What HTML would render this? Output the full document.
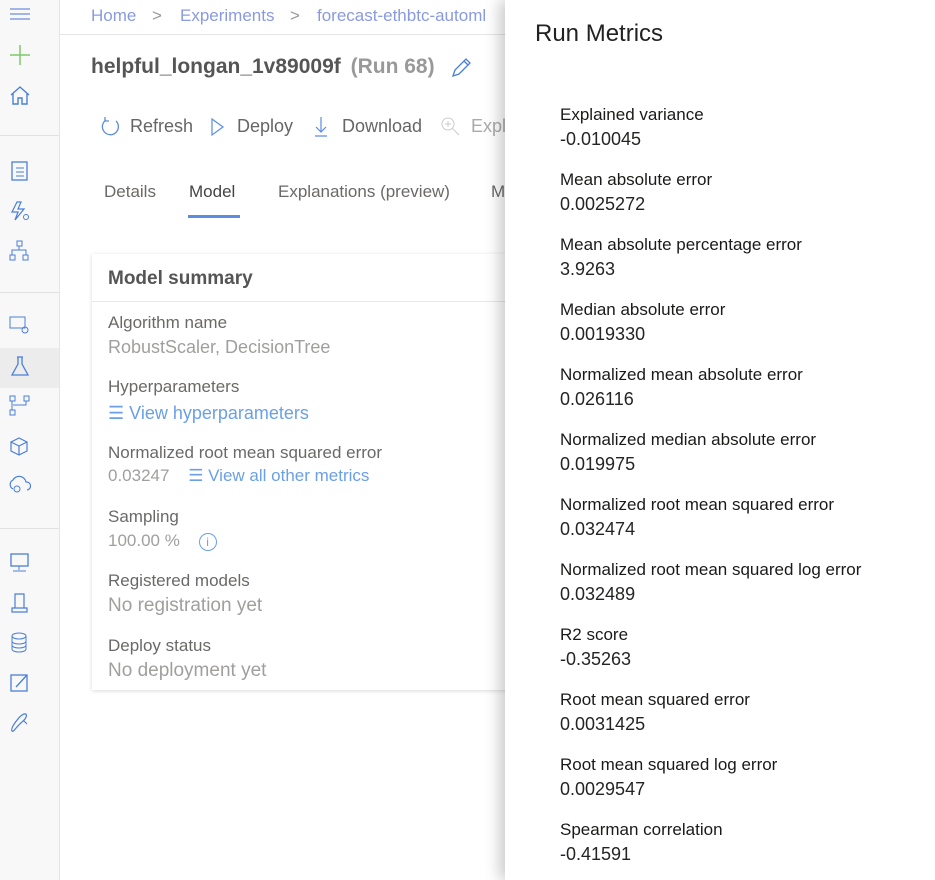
<!DOCTYPE html>
<html><head><style>
*{margin:0;padding:0;box-sizing:border-box}
body{width:935px;height:880px;position:relative;overflow:hidden;background:#fff;font-family:"Segoe UI","Liberation Sans",sans-serif;color:#323130}
.side{position:absolute;left:0;top:0;width:60px;height:880px;background:#f8f8f8;border-right:1px solid #e5e5e5}
.side .sep{position:absolute;left:0;width:59px;height:1px;background:#e1e1e1}
.side svg{position:absolute;left:9px}
.main{position:absolute;left:60px;top:0;width:445px;height:880px;color:#6f6d6b}
.bc{position:absolute;left:0;top:0;width:445px;height:35px;border-bottom:1px solid #e5e5e5;font-size:17px;color:#8a9ae0}
.bc span{position:absolute;top:6px}
.panel{position:absolute;left:505px;top:0;width:430px;height:880px;background:#fff;box-shadow:-6px 0 14px rgba(0,0,0,.2)}
.panel h1{position:absolute;left:30px;top:20px;font-size:24px;font-weight:400;color:#222}
.m{position:absolute;left:55px;font-size:17px;color:#1b1a19;line-height:25px}
.m div+div{font-size:18px;color:#252423}
.card{position:absolute;left:32px;top:254px;width:420px;height:436px;background:#fff;box-shadow:0 1px 4px rgba(0,0,0,.15)}
.lab{position:absolute;left:16px;font-size:17px;color:#6b6967}
.val{position:absolute;left:16px;font-size:18px;color:#a19f9d}
.link{color:#6b9fe8}
</style></head><body>
<div class="side">
<svg style="top:6px" width="22" height="16"><path d="M1 3h20M1 8h20M1 13h20" stroke="#6b8fe0" stroke-width="1.2"/></svg>
<svg style="top:44px" width="22" height="22"><path d="M11 1v20M1 11h20" stroke="#7dc96a" stroke-width="1.5"/></svg>
<svg style="top:85px" width="22" height="22"><path d="M2 10L11 2l9 8M4 8v11h5v-6h4v6h5V8" stroke="#4a7fd8" stroke-width="1.4" fill="none"/></svg>
<div class="sep" style="top:135px"></div>
<svg style="top:160px" width="22" height="22"><rect x="3" y="2" width="15" height="18" stroke="#4a7fd8" fill="none" stroke-width="1.3"/><path d="M7 8h8M7 12h8M7 16h8" stroke="#4a7fd8"/></svg>
<svg style="top:200px" width="22" height="22"><path d="M8 2l-5 10h6l-3 8 9-11h-6l3-7z" stroke="#4a7fd8" fill="none" stroke-width="1.2"/><circle cx="17" cy="17" r="2.5" stroke="#4a7fd8" fill="none"/></svg>
<svg style="top:240px" width="22" height="22"><rect x="8" y="1" width="5" height="5" stroke="#4a7fd8" fill="none"/><rect x="1" y="15" width="5" height="5" stroke="#4a7fd8" fill="none"/><rect x="14" y="15" width="5" height="5" stroke="#4a7fd8" fill="none"/><path d="M10 6v4M3 15v-5h14v5" stroke="#4a7fd8" fill="none"/></svg>
<div class="sep" style="top:292px"></div>
<svg style="top:315px" width="22" height="22"><rect x="1" y="2" width="15" height="11" stroke="#4a7fd8" fill="none"/><circle cx="16" cy="15" r="3" stroke="#4a7fd8" fill="none"/></svg>
<div style="position:absolute;left:0;top:348px;width:59px;height:40px;background:#ececec"></div>
<svg style="top:355px" width="22" height="22"><path d="M8 2h6M9 2v7L3 20h16L13 9V2" stroke="#4a7fd8" fill="none" stroke-width="1.3"/></svg>
<svg style="top:395px" width="22" height="22"><rect x="1" y="1" width="5" height="5" stroke="#4a7fd8" fill="none"/><rect x="15" y="1" width="5" height="5" stroke="#4a7fd8" fill="none"/><rect x="1" y="15" width="5" height="5" stroke="#4a7fd8" fill="none"/><path d="M3 6v9M17 6v4H4" stroke="#4a7fd8" fill="none"/></svg>
<svg style="top:436px" width="22" height="22"><path d="M10 2l8 4v9l-8 4-8-4V6zM2 6l8 4 8-4M10 10v9" stroke="#4a7fd8" fill="none" stroke-width="1.2"/></svg>
<svg style="top:475px" width="22" height="22"><path d="M4 14a5 5 0 010-9 7 7 0 0113 2 4 4 0 011 8" stroke="#4a7fd8" fill="none" stroke-width="1.2"/><circle cx="8" cy="14" r="3" stroke="#4a7fd8" fill="none"/></svg>
<div class="sep" style="top:528px"></div>
<svg style="top:552px" width="22" height="22"><rect x="2" y="2" width="17" height="12" stroke="#4a7fd8" fill="none" stroke-width="1.3"/><path d="M10 14v4M4 19h13" stroke="#4a7fd8"/></svg>
<svg style="top:592px" width="22" height="22"><path d="M6 2h9v14H6zM3 20h15v-4H3z" stroke="#4a7fd8" fill="none" stroke-width="1.2"/></svg>
<svg style="top:632px" width="22" height="22"><ellipse cx="10" cy="4" rx="7" ry="3" stroke="#4a7fd8" fill="none"/><path d="M3 4v13c0 4 14 4 14 0V4M3 9c0 4 14 4 14 0M3 13c0 4 14 4 14 0" stroke="#4a7fd8" fill="none"/></svg>
<svg style="top:672px" width="22" height="22"><rect x="2" y="3" width="16" height="16" stroke="#4a7fd8" fill="none" stroke-width="1.3"/><path d="M7 15l11-12" stroke="#4a7fd8" stroke-width="1.3"/></svg>
<svg style="top:712px" width="22" height="22"><path d="M3 19c-2-3 8-16 12-17s3 4-2 8-9 11-10 9zM14 8l4 4" stroke="#4a7fd8" fill="none" stroke-width="1.2"/></svg>
</div>
<div class="main">
<div class="bc"><span style="left:31px">Home</span><span style="left:92px;color:#999">&gt;</span><span style="left:120px">Experiments</span><span style="left:230px;color:#999">&gt;</span><span style="left:257px">forecast-ethbtc-automl</span></div>
<div style="position:absolute;left:31px;top:55px;font-size:21px;font-weight:600;color:#555;white-space:nowrap">helpful_longan_1v89009f <span style="font-weight:600;color:#999;margin-left:4px">(Run 68)</span></div>
<svg style="position:absolute;left:390px;top:57px" width="22" height="22"><path d="M3 19l2-6L16 2l4 4L9 17zM14 4l4 4" stroke="#4a7fd8" fill="none" stroke-width="1.3"/></svg>
<div style="position:absolute;top:116px;left:0;font-size:18px;color:#666;width:445px;height:24px">
<svg style="position:absolute;left:39px;top:0" width="22" height="22"><path d="M17 5a8 8 0 11-10-1M6 1v4h4" stroke="#5b8de3" fill="none" stroke-width="1.3"/></svg>
<span style="position:absolute;left:70px">Refresh</span>
<svg style="position:absolute;left:150px;top:1px" width="16" height="20"><path d="M2 2l11 8-11 8z" stroke="#5b8de3" fill="none" stroke-width="1.2"/></svg>
<span style="position:absolute;left:177px">Deploy</span>
<svg style="position:absolute;left:253px;top:0" width="16" height="22"><path d="M8 1v15M3 11l5 5 5-5M2 20h12" stroke="#5b8de3" fill="none" stroke-width="1.2"/></svg>
<span style="position:absolute;left:282px">Download</span>
<svg style="position:absolute;left:380px;top:0" width="22" height="22"><circle cx="8" cy="8" r="6" stroke="#ccc" fill="none"/><path d="M12 12l7 7M5 8h6M8 5v6" stroke="#ccc"/></svg>
<span style="position:absolute;left:411px;color:#aaa">Expla</span>
</div>
<div style="position:absolute;top:182px;font-size:17px;color:#6b6967;width:445px">
<span style="position:absolute;left:44px">Details</span>
<span style="position:absolute;left:129px;color:#444">Model</span>
<span style="position:absolute;left:218px">Explanations (preview)</span>
<span style="position:absolute;left:431px">M</span>
</div>
<div style="position:absolute;left:128px;top:215px;width:52px;height:3px;background:#5b8de3"></div>
<div class="card">
<div style="position:absolute;left:16px;top:14px;font-size:19px;font-weight:600;color:#555">Model summary</div>
<div style="position:absolute;left:0;top:47px;width:420px;height:1px;background:#e8e8e8"></div>
<div class="lab" style="top:59px">Algorithm name</div><div class="val" style="top:83px">RobustScaler, DecisionTree</div>
<div class="lab" style="top:123px">Hyperparameters</div><div class="val link" style="top:149px">☰ View hyperparameters</div>
<div class="lab" style="top:189px">Normalized root mean squared error</div><div class="val" style="top:212px;font-size:17px">0.03247 <span class="link" style="margin-left:14px">☰ View all other metrics</span></div>
<div class="lab" style="top:253px">Sampling</div><div class="val" style="top:277px;font-size:17px">100.00 % <span class="link" style="margin-left:14px;display:inline-block;width:18px;height:18px;border:1.3px solid #6b9fe8;border-radius:50%;font-size:12px;text-align:center;line-height:16px">i</span></div>
<div class="lab" style="top:317px">Registered models</div><div class="val" style="top:341px;font-size:19px">No registration yet</div>
<div class="lab" style="top:382px">Deploy status</div><div class="val" style="top:406px;font-size:19px">No deployment yet</div>
</div>
</div>
<div class="panel">
<h1>Run Metrics</h1>
<div class="m" style="top:102px"><div>Explained variance</div><div>-0.010045</div></div>
<div class="m" style="top:167px"><div>Mean absolute error</div><div>0.0025272</div></div>
<div class="m" style="top:232px"><div>Mean absolute percentage error</div><div>3.9263</div></div>
<div class="m" style="top:297px"><div>Median absolute error</div><div>0.0019330</div></div>
<div class="m" style="top:362px"><div>Normalized mean absolute error</div><div>0.026116</div></div>
<div class="m" style="top:427px"><div>Normalized median absolute error</div><div>0.019975</div></div>
<div class="m" style="top:492px"><div>Normalized root mean squared error</div><div>0.032474</div></div>
<div class="m" style="top:557px"><div>Normalized root mean squared log error</div><div>0.032489</div></div>
<div class="m" style="top:622px"><div>R2 score</div><div>-0.35263</div></div>
<div class="m" style="top:687px"><div>Root mean squared error</div><div>0.0031425</div></div>
<div class="m" style="top:752px"><div>Root mean squared log error</div><div>0.0029547</div></div>
<div class="m" style="top:817px"><div>Spearman correlation</div><div>-0.41591</div></div>
</div>
</body></html>
